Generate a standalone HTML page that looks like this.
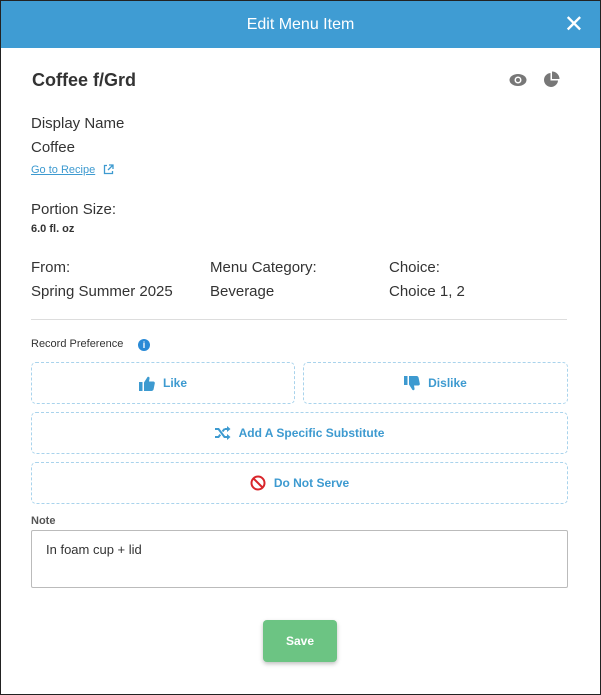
<!DOCTYPE html>
<html><head><style>
*{box-sizing:border-box;margin:0;padding:0}
body{width:601px;height:695px;font-family:"Liberation Sans",sans-serif;color:#333;background:#fff;border:1px solid #222;position:relative;overflow:hidden}
.hdr{position:absolute;left:0;top:0;width:599px;height:47px;background:#3f9cd3;color:#fff;font-size:16px;text-align:center;line-height:47px}
.x{position:absolute;right:16px;top:0;font-size:24px;line-height:47px}
.a{position:absolute;white-space:nowrap}
.btn{position:absolute;border:1px dashed #a9d3ec;border-radius:5px;color:#3d9ad0;font-weight:bold;font-size:12px;display:flex;align-items:center;justify-content:center;gap:8px}
</style></head><body>
<div class="hdr">Edit Menu Item<span class="x">✕</span></div>
<div class="a" style="left:31px;top:69px;font-size:18px;font-weight:bold;color:#333">Coffee f/Grd</div>
<svg class="a" style="left:508px;top:71px" width="18" height="16" viewBox="0 0 18 16"><ellipse cx="9" cy="8" rx="8.5" ry="6" fill="#777"/><circle cx="9" cy="8" r="3.5" fill="#fff"/><circle cx="9" cy="8" r="2" fill="#777"/></svg>
<svg class="a" style="left:542px;top:70px" width="17" height="17" viewBox="0 0 17 17"><path d="M7.5 2A7 7 0 1 0 15 9.5H7.5z" fill="#777"/><path d="M9 0.5V8h7.5A7.5 7.5 0 0 0 9 0.5z" fill="#777"/></svg>
<div class="a" style="left:30px;top:114px;font-size:15px">Display Name</div>
<div class="a" style="left:30px;top:138px;font-size:15px">Coffee</div>
<div class="a" style="left:30px;top:163px;font-size:11px;color:#3d9ad0;text-decoration:underline">Go to Recipe</div>
<svg class="a" style="left:102px;top:163px" width="11" height="11" viewBox="0 0 11 11" fill="none" stroke="#3d9ad0" stroke-width="1.3"><path d="M4 1.5H1.5v8h8V7M6 1h4v4M10 1L5 6"/></svg>
<div class="a" style="left:30px;top:200px;font-size:15px">Portion Size:</div>
<div class="a" style="left:30px;top:222px;font-size:11px;font-weight:bold">6.0 fl. oz</div>
<div class="a" style="left:30px;top:258px;font-size:15px">From:</div>
<div class="a" style="left:30px;top:282px;font-size:15px">Spring Summer 2025</div>
<div class="a" style="left:209px;top:258px;font-size:15px">Menu Category:</div>
<div class="a" style="left:209px;top:282px;font-size:15px">Beverage</div>
<div class="a" style="left:388px;top:258px;font-size:15px">Choice:</div>
<div class="a" style="left:388px;top:282px;font-size:15px">Choice 1, 2</div>
<div class="a" style="left:30px;top:318px;width:536px;height:1px;background:#ddd"></div>
<div class="a" style="left:30px;top:337px;font-size:11px">Record Preference</div>
<div class="a" style="left:137px;top:338px;width:12px;height:12px;border-radius:50%;background:#2a8ad6;color:#fff;font-size:9px;font-weight:bold;text-align:center;line-height:12px">i</div>
<div class="btn" style="left:30px;top:361px;width:264px;height:42px"><svg width="16" height="15" viewBox="0 0 16 15"><rect x="0" y="6" width="3.5" height="9" fill="#3d9ad0"/><path d="M5 6.5L8.5 1c1.3-.6 2.3.3 2 1.6L10 5.5h4.3c1 0 1.7.9 1.5 1.8l-1.2 6c-.2.9-1 1.7-2 1.7H5z" fill="#3d9ad0"/></svg>Like</div>
<div class="btn" style="left:302px;top:361px;width:265px;height:42px"><svg width="16" height="15" viewBox="0 0 16 15" style="transform:scaleY(-1)"><rect x="0" y="6" width="3.5" height="9" fill="#3d9ad0"/><path d="M5 6.5L8.5 1c1.3-.6 2.3.3 2 1.6L10 5.5h4.3c1 0 1.7.9 1.5 1.8l-1.2 6c-.2.9-1 1.7-2 1.7H5z" fill="#3d9ad0"/></svg>Dislike</div>
<div class="btn" style="left:30px;top:411px;width:537px;height:42px"><svg width="16" height="14" viewBox="0 0 16 14" fill="none" stroke="#3d9ad0" stroke-width="2"><path d="M0 3h3.5l6 8H13M0 11h3.5l1.8-2.4M9.5 3H13M7.5 5.5L9.5 3"/><path d="M12 0l3.5 3L12 6zM12 8l3.5 3L12 14z" fill="#3d9ad0" stroke="none"/></svg>Add A Specific Substitute</div>
<div class="btn" style="left:30px;top:461px;width:537px;height:42px"><svg width="16" height="16" viewBox="0 0 16 16"><circle cx="8" cy="8" r="6.5" fill="none" stroke="#d9252b" stroke-width="2"/><path d="M3.5 3.5l9 9" stroke="#d9252b" stroke-width="2"/></svg>Do Not Serve</div>
<div class="a" style="left:30px;top:514px;font-size:11px;font-weight:bold;color:#555">Note</div>
<div class="a" style="left:30px;top:529px;width:537px;height:58px;border:1px solid #bbb;border-radius:2px;padding:11px 14px;font-size:13px">In foam cup + lid</div>
<div class="a" style="left:262px;top:619px;width:74px;height:42px;background:#6cc483;border-radius:4px;color:#fff;font-size:12px;font-weight:bold;text-align:center;line-height:42px;box-shadow:0 2px 4px rgba(0,0,0,.25)">Save</div>
</body></html>
